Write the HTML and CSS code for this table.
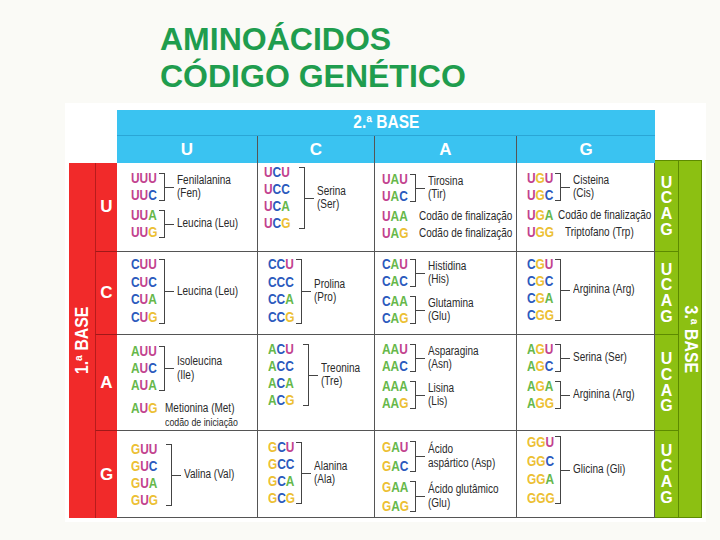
FILE: index.html
```html
<!DOCTYPE html>
<html lang="pt">
<head>
<meta charset="utf-8">
<title>Aminoácidos – Código genético</title>
<link rel="stylesheet" href="styles.css">
</head>
<body>
<h1 class="title">AMINOÁCIDOS<br>CÓDIGO GENÉTICO</h1>
<div class="pic">
  <div class="tbl">
    <div class="corner"></div>
    <div class="base2"><span>2.ª BASE</span></div>
    <div class="topright"></div>
    <div class="base1"><span>1.ª BASE</span></div>
    <div class="base3"><span>3.ª BASE</span></div>

    <div class="ch">U</div>
    <div class="ch">C</div>
    <div class="ch">A</div>
    <div class="ch ch-last">G</div>

    <!-- Row U -->
    <div class="rl">U</div>
    <div class="cell cu pt7">
      <div class="grp">
        <div class="cods"><span><i class="u">UUU</i></span><span><i class="u">UU</i><i class="c">C</i></span></div>
        <span class="br"></span><span class="dash"></span>
        <span class="lbl">Fenilalanina<br>(Fen)</span>
      </div>
      <div class="grp">
        <div class="cods"><span><i class="u">UU</i><i class="a">A</i></span><span><i class="u">UU</i><i class="g">G</i></span></div>
        <span class="br"></span><span class="dash"></span>
        <span class="lbl">Leucina (Leu)</span>
      </div>
    </div>
    <div class="cell cc pl6 pt1">
      <div class="grp">
        <div class="cods"><span><i class="u">U</i><i class="c">C</i><i class="u">U</i></span><span><i class="u">U</i><i class="c">CC</i></span><span><i class="u">U</i><i class="c">C</i><i class="a">A</i></span><span><i class="u">U</i><i class="c">C</i><i class="g">G</i></span></div>
        <span class="br wide"></span><span class="dash"></span>
        <span class="lbl">Serina<br>(Ser)</span>
      </div>
    </div>
    <div class="cell ca pt8">
      <div class="grp">
        <div class="cods"><span><i class="u">U</i><i class="a">A</i><i class="u">U</i></span><span><i class="u">U</i><i class="a">A</i><i class="c">C</i></span></div>
        <span class="br"></span><span class="dash"></span>
        <span class="lbl">Tirosina<br>(Tir)</span>
      </div>
      <div class="singles">
        <div class="one"><span class="cod"><i class="u">U</i><i class="a">AA</i></span><span class="lbl ml11">Codão de finalização</span></div>
        <div class="one"><span class="cod"><i class="u">U</i><i class="a">A</i><i class="g">G</i></span><span class="lbl ml11">Codão de finalização</span></div>
      </div>
    </div>
    <div class="cell cg pt7">
      <div class="grp">
        <div class="cods"><span><i class="u">U</i><i class="g">G</i><i class="u">U</i></span><span><i class="u">U</i><i class="g">G</i><i class="c">C</i></span></div>
        <span class="br"></span><span class="dash"></span>
        <span class="lbl">Cisteina<br>(Cis)</span>
      </div>
      <div class="singles">
        <div class="one"><span class="cod"><i class="u">U</i><i class="g">G</i><i class="a">A</i></span><span class="lbl ml5">Codão de finalização</span></div>
        <div class="one"><span class="cod"><i class="u">U</i><i class="g">GG</i></span><span class="lbl ml12">Triptofano (Trp)</span></div>
      </div>
    </div>
    <div class="gl gl-first"><span>U</span><span>C</span><span>A</span><span>G</span></div>

    <!-- Row C -->
    <div class="rl">C</div>
    <div class="cell cu pt4 mid">
      <div class="grp">
        <div class="cods"><span><i class="c">C</i><i class="u">UU</i></span><span><i class="c">C</i><i class="u">U</i><i class="c">C</i></span><span><i class="c">C</i><i class="u">U</i><i class="a">A</i></span><span><i class="c">C</i><i class="u">U</i><i class="g">G</i></span></div>
        <span class="br"></span><span class="dash"></span>
        <span class="lbl">Leucina (Leu)</span>
      </div>
    </div>
    <div class="cell cc pt4 mid">
      <div class="grp">
        <div class="cods"><span><i class="c">CC</i><i class="u">U</i></span><span><i class="c">CCC</i></span><span><i class="c">CC</i><i class="a">A</i></span><span><i class="c">CC</i><i class="g">G</i></span></div>
        <span class="br"></span><span class="dash"></span>
        <span class="lbl">Prolina<br>(Pro)</span>
      </div>
    </div>
    <div class="cell ca pt4">
      <div class="grp">
        <div class="cods"><span><i class="c">C</i><i class="a">A</i><i class="u">U</i></span><span><i class="c">C</i><i class="a">A</i><i class="c">C</i></span></div>
        <span class="br"></span><span class="dash"></span>
        <span class="lbl">Histidina<br>(His)</span>
      </div>
      <div class="grp">
        <div class="cods"><span><i class="c">C</i><i class="a">AA</i></span><span><i class="c">C</i><i class="a">A</i><i class="g">G</i></span></div>
        <span class="br"></span><span class="dash"></span>
        <span class="lbl">Glutamina<br>(Glu)</span>
      </div>
    </div>
    <div class="cell cg pt4">
      <div class="grp">
        <div class="cods"><span><i class="c">C</i><i class="g">G</i><i class="u">U</i></span><span><i class="c">C</i><i class="g">G</i><i class="c">C</i></span><span><i class="c">C</i><i class="g">G</i><i class="a">A</i></span><span><i class="c">C</i><i class="g">GG</i></span></div>
        <span class="br"></span><span class="dash"></span>
        <span class="lbl">Arginina (Arg)</span>
      </div>
    </div>
    <div class="gl"><span>U</span><span>C</span><span>A</span><span>G</span></div>

    <!-- Row A -->
    <div class="rl">A</div>
    <div class="cell cu pt8">
      <div class="grp">
        <div class="cods"><span><i class="a">A</i><i class="u">UU</i></span><span><i class="a">A</i><i class="u">U</i><i class="c">C</i></span><span><i class="a">A</i><i class="u">U</i><i class="a">A</i></span></div>
        <span class="br"></span><span class="dash"></span>
        <span class="lbl">Isoleucina<br>(Ile)</span>
      </div>
      <div class="one gap6"><span class="cod"><i class="a">A</i><i class="u">U</i><i class="g">G</i></span><span class="lbl ml8">Metionina (Met)<br><small>codão de iniciação</small></span></div>
    </div>
    <div class="cell cc pt6">
      <div class="grp">
        <div class="cods"><span><i class="a">A</i><i class="c">C</i><i class="u">U</i></span><span><i class="a">A</i><i class="c">CC</i></span><span><i class="a">A</i><i class="c">C</i><i class="a">A</i></span><span><i class="a">A</i><i class="c">C</i><i class="g">G</i></span></div>
        <span class="br wide"></span><span class="dash"></span>
        <span class="lbl">Treonina<br>(Tre)</span>
      </div>
    </div>
    <div class="cell ca pt6">
      <div class="grp">
        <div class="cods"><span><i class="a">AA</i><i class="u">U</i></span><span><i class="a">AA</i><i class="c">C</i></span></div>
        <span class="br"></span><span class="dash"></span>
        <span class="lbl">Asparagina<br>(Asn)</span>
      </div>
      <div class="grp">
        <div class="cods"><span><i class="a">AAA</i></span><span><i class="a">AA</i><i class="g">G</i></span></div>
        <span class="br"></span><span class="dash"></span>
        <span class="lbl">Lisina<br>(Lis)</span>
      </div>
    </div>
    <div class="cell cg pt6">
      <div class="grp">
        <div class="cods"><span><i class="a">A</i><i class="g">G</i><i class="u">U</i></span><span><i class="a">A</i><i class="g">G</i><i class="c">C</i></span></div>
        <span class="br"></span><span class="dash"></span>
        <span class="lbl">Serina (Ser)</span>
      </div>
      <div class="grp">
        <div class="cods"><span><i class="a">A</i><i class="g">G</i><i class="a">A</i></span><span><i class="a">A</i><i class="g">GG</i></span></div>
        <span class="br"></span><span class="dash"></span>
        <span class="lbl">Arginina (Arg)</span>
      </div>
    </div>
    <div class="gl"><span>U</span><span>C</span><span>A</span><span>G</span></div>

    <!-- Row G -->
    <div class="rl rl-last">G</div>
    <div class="cell cu pt10">
      <div class="grp">
        <div class="cods"><span><i class="g">G</i><i class="u">UU</i></span><span><i class="g">G</i><i class="u">U</i><i class="c">C</i></span><span><i class="g">G</i><i class="u">U</i><i class="a">A</i></span><span><i class="g">G</i><i class="u">U</i><i class="g">G</i></span></div>
        <span class="br wide"></span><span class="dash"></span>
        <span class="lbl">Valina (Val)</span>
      </div>
    </div>
    <div class="cell cc pt8">
      <div class="grp">
        <div class="cods"><span><i class="g">G</i><i class="c">C</i><i class="u">U</i></span><span><i class="g">G</i><i class="c">CC</i></span><span><i class="g">G</i><i class="c">C</i><i class="a">A</i></span><span><i class="g">G</i><i class="c">C</i><i class="g">G</i></span></div>
        <span class="br"></span><span class="dash"></span>
        <span class="lbl">Alanina<br>(Ala)</span>
      </div>
    </div>
    <div class="cell ca pt7 tall">
      <div class="grp">
        <div class="cods"><span><i class="g">G</i><i class="a">A</i><i class="u">U</i></span><span><i class="g">G</i><i class="a">A</i><i class="c">C</i></span></div>
        <span class="br"></span><span class="dash"></span>
        <span class="lbl">Ácido<br>aspártico (Asp)</span>
      </div>
      <div class="grp">
        <div class="cods"><span><i class="g">G</i><i class="a">AA</i></span><span><i class="g">G</i><i class="a">A</i><i class="g">G</i></span></div>
        <span class="br"></span><span class="dash"></span>
        <span class="lbl">Ácido glutâmico<br>(Glu)</span>
      </div>
    </div>
    <div class="cell cg pt2 tall">
      <div class="grp">
        <div class="cods"><span><i class="g">GG</i><i class="u">U</i></span><span><i class="g">GG</i><i class="c">C</i></span><span><i class="g">GG</i><i class="a">A</i></span><span><i class="g">GGG</i></span></div>
        <span class="br"></span><span class="dash"></span>
        <span class="lbl">Glicina (Gli)</span>
      </div>
    </div>
    <div class="gl gl-last"><span>U</span><span>C</span><span>A</span><span>G</span></div>
  </div>
</div>
</body>
</html>
```

FILE: styles.css
```css
body {
  margin: 0;
  background: #fafaf6;
  font-family: "Liberation Sans", Arial, sans-serif;
}

.title {
  margin: 0;
  padding: 21px 0 0 160px;
  font-size: 32px;
  line-height: 37px;
  font-weight: bold;
  color: #1f9d4e;
}

.pic {
  margin: 8px 0 0 65px;
  width: 641px;
  height: 419px;
  padding: 7px 0 0 4px;
  box-sizing: border-box;
  background: #ffffff;
}

.tbl {
  display: grid;
  grid-template-columns: 26px 22px 141px 117px 142px 138px 24px 23px;
  grid-template-rows: 26px 27px 89px 83px 96px 87px;
  font-family: "Liberation Sans", Arial, sans-serif;
}

.corner { grid-column: 1 / 3; grid-row: 1 / 3; }
.topright { grid-column: 7 / 9; grid-row: 1 / 3; }

.base2 {
  grid-column: 3 / 7;
  grid-row: 1;
  background: #3ac3f1;
  border-bottom: 1px solid #2aa6d6;
  color: #fff;
  font-weight: bold;
  font-size: 18px;
  display: flex;
  align-items: center;
  justify-content: center;
}
.base2 span { display: inline-block; transform: scaleX(0.86); }

.ch {
  background: #3ac3f1;
  color: #fff;
  font-weight: bold;
  font-size: 17px;
  display: flex;
  align-items: center;
  justify-content: center;
  border-right: 1px solid #555;
}
.ch-last { border-right: 0; }

.base1 {
  grid-column: 1;
  grid-row: 3 / 7;
  background: #f12a2a;
  display: flex;
  align-items: center;
  justify-content: center;
}
.base1 span {
  writing-mode: vertical-rl;
  transform: rotate(180deg) scale(1, 0.88);
  color: #fff;
  font-weight: bold;
  font-size: 18px;
}

.rl {
  background: #f12a2a;
  border-left: 1px solid #b81c1c;
  border-bottom: 1px solid #a01818;
  color: #fff;
  font-weight: bold;
  font-size: 17px;
  display: flex;
  align-items: center;
  justify-content: center;
}
.rl-last { border-bottom: 0; }

.base3 {
  grid-column: 8;
  grid-row: 3 / 7;
  margin-top: -3px;
  background: #8cc012;
  border-right: 1px solid #5d8a00;
  border-top: 1px solid #5d8a00;
  border-bottom: 1px solid #5d8a00;
  display: flex;
  align-items: center;
  justify-content: center;
}
.base3 span {
  writing-mode: vertical-rl;
  transform: scale(1, 0.88);
  color: #fff;
  font-weight: bold;
  font-size: 18px;
}

.gl {
  background: #8cc012;
  border-right: 1px solid #5d8a00;
  border-bottom: 1px solid #5d8a00;
  display: flex;
  flex-direction: column;
  align-items: center;
  justify-content: center;
  color: #fff;
  font-weight: bold;
  font-size: 16px;
  line-height: 15.7px;
}
.gl-first { margin-top: -3px; border-top: 1px solid #5d8a00; }

.cell {
  background: #fff;
  border-right: 1px solid #555;
  border-bottom: 1px solid #555;
  display: flex;
  flex-direction: column;
  gap: 3px;
  min-width: 0;
}
.cu { padding-left: 14px; }
.cc { padding-left: 10px; }
.ca { padding-left: 7px; }
.cg { padding-left: 10px; }
.pl6 { padding-left: 6px; }
.pt1 { padding-top: 1px; }
.pt2 { padding-top: 2px; }
.pt4 { padding-top: 4px; }
.pt6 { padding-top: 6px; }
.pt7 { padding-top: 7px; }
.pt8 { padding-top: 8px; }
.pt10 { padding-top: 10px; }
.mid .cods { line-height: 17.7px; }
.tall .cods { line-height: 18.5px; }

.grp {
  display: flex;
  align-items: stretch;
}

.cods, .cod {
  width: 26px;
  flex: none;
  font-weight: bold;
  font-size: 14px;
  line-height: 17px;
  white-space: nowrap;
  transform: scaleX(0.85);
  transform-origin: left center;
}
.cods {
  display: flex;
  flex-direction: column;
}
.cod { display: inline-block; }

.cods i, .cod i { font-style: normal; }
.u { color: #c2428e; }
.c { color: #2b5abd; }
.a { color: #66b84a; }
.g { color: #ecc034; }

.br {
  width: 5px;
  flex: none;
  margin: 3px 0 3px 2px;
  border: 1px solid #444;
  border-left: 0;
}
.br.wide { margin-left: 9px; }

.dash {
  width: 9px;
  flex: none;
  height: 1px;
  background: #444;
  align-self: center;
}

.lbl {
  align-self: center;
  margin-left: 3px;
  font-size: 12.5px;
  line-height: 13.5px;
  color: #2a2a2a;
  white-space: nowrap;
  transform: scaleX(0.8);
  transform-origin: left center;
}
.lbl small {
  font-size: 11px;
  line-height: 12px;
}

.singles {
  display: flex;
  flex-direction: column;
}

.one {
  display: flex;
  align-items: flex-start;
}
.one .lbl { align-self: flex-start; padding-top: 2px; }
.gap6 { margin-top: 3px; }
.ml5 { margin-left: 5px; }
.ml8 { margin-left: 8px; }
.ml11 { margin-left: 11px; }
.ml12 { margin-left: 12px; }
```
